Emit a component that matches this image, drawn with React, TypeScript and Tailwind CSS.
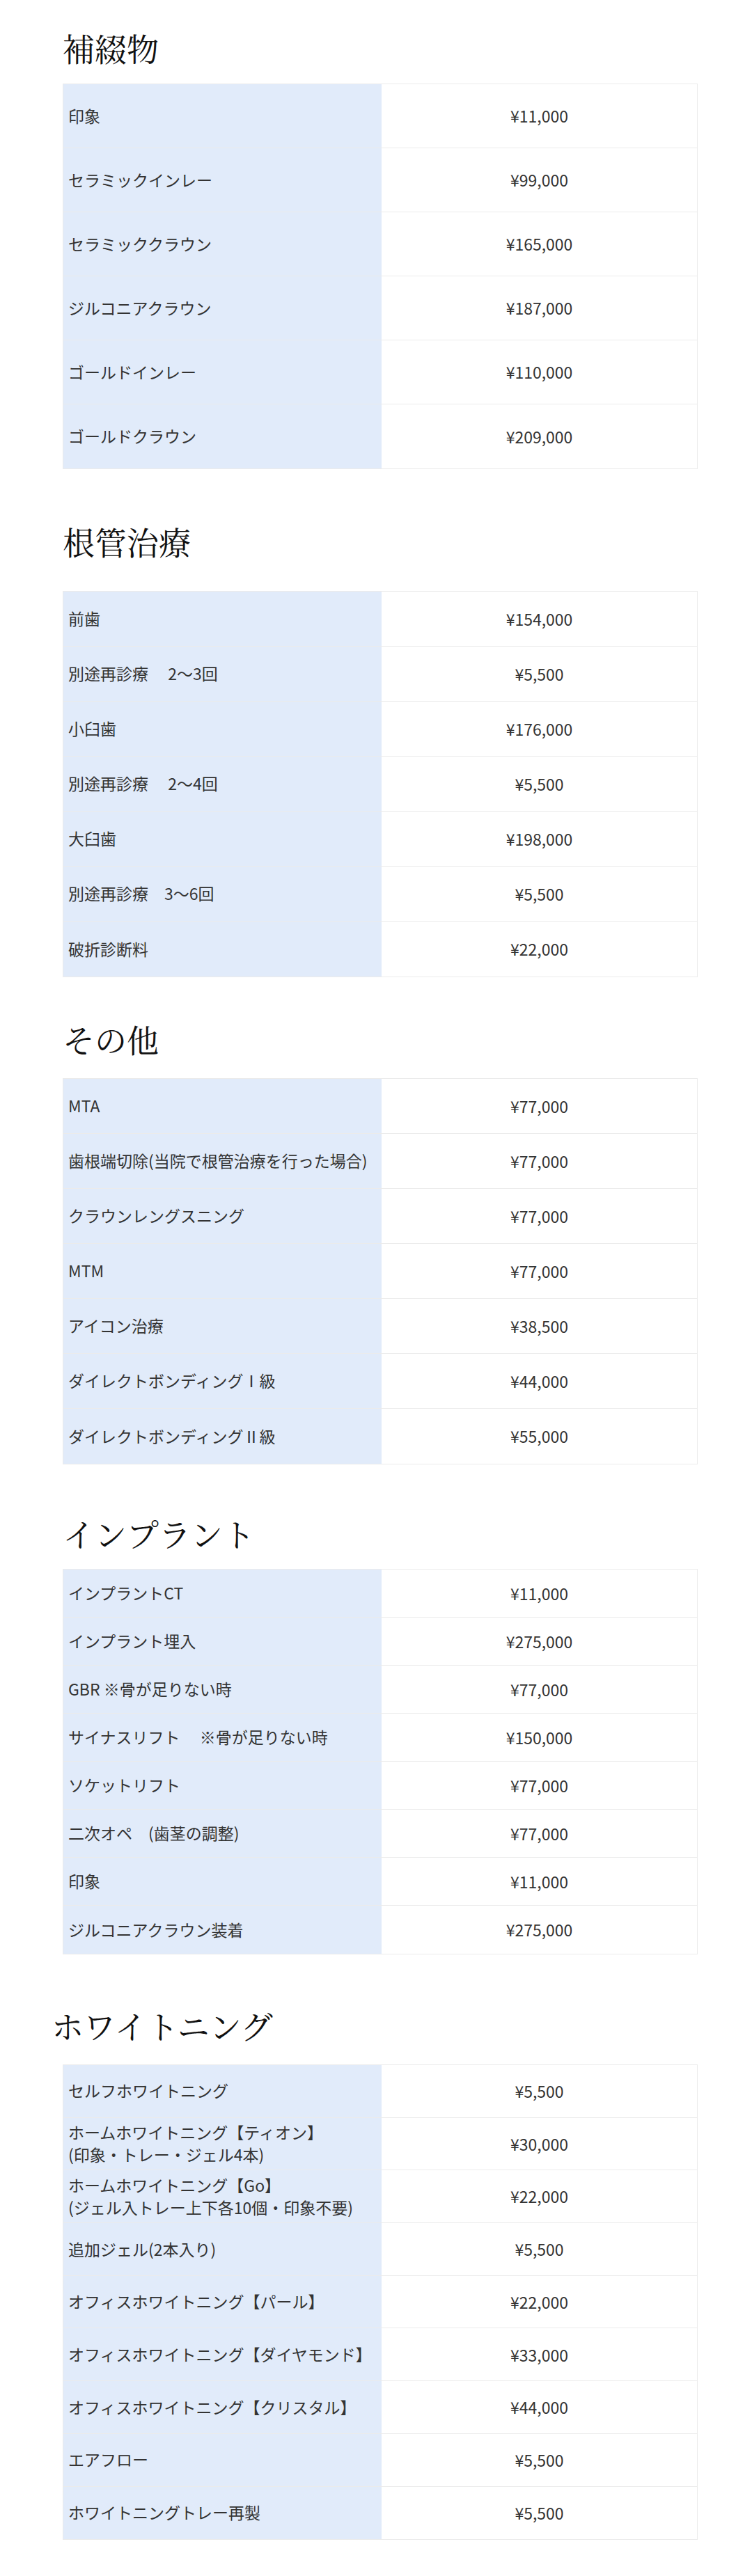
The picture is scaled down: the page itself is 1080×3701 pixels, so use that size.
// Price list for dental treatments: five sections, each a serif heading
// over a two-column table (treatment name on a pale blue band, price centred
// on white). Row heights and heading gaps differ per section, so each
// section carries its own spacing classes.

type Row = [string, string];

interface Section {
  title: string;
  headingClass: string;
  rowClass: string;
  rows: Row[];
}

const sections: Section[] = [
  {
    title: "補綴物",
    headingClass: "mt-[45px] mb-[29px] ml-[90px]",
    rowClass: "h-[92px]",
    rows: [
      ["印象", "¥11,000"],
      ["セラミックインレー", "¥99,000"],
      ["セラミッククラウン", "¥165,000"],
      ["ジルコニアクラウン", "¥187,000"],
      ["ゴールドインレー", "¥110,000"],
      ["ゴールドクラウン", "¥209,000"],
    ],
  },
  {
    title: "根管治療",
    headingClass: "mt-[80px] mb-[49px] ml-[90px]",
    rowClass: "h-[79px]",
    rows: [
      ["前歯", "¥154,000"],
      ["別途再診療　 2～3回", "¥5,500"],
      ["小臼歯", "¥176,000"],
      ["別途再診療　 2～4回", "¥5,500"],
      ["大臼歯", "¥198,000"],
      ["別途再診療　3～6回", "¥5,500"],
      ["破折診断料", "¥22,000"],
    ],
  },
  {
    title: "その他",
    headingClass: "mt-[65px] mb-[34px] ml-[90px]",
    rowClass: "h-[79px]",
    rows: [
      ["MTA", "¥77,000"],
      ["歯根端切除(当院で根管治療を行った場合)", "¥77,000"],
      ["クラウンレングスニング", "¥77,000"],
      ["MTM", "¥77,000"],
      ["アイコン治療", "¥38,500"],
      ["ダイレクトボンディングⅠ級", "¥44,000"],
      ["ダイレクトボンディングⅡ級", "¥55,000"],
    ],
  },
  {
    title: "インプラント",
    headingClass: "mt-[75px] mb-[29px] ml-[90px]",
    rowClass: "h-[69px]",
    rows: [
      ["インプラントCT", "¥11,000"],
      ["インプラント埋入", "¥275,000"],
      ["GBR ※骨が足りない時", "¥77,000"],
      ["サイナスリフト　 ※骨が足りない時", "¥150,000"],
      ["ソケットリフト", "¥77,000"],
      ["二次オペ　(歯茎の調整)", "¥77,000"],
      ["印象", "¥11,000"],
      ["ジルコニアクラウン装着", "¥275,000"],
    ],
  },
  {
    title: "ホワイトニング",
    headingClass: "mt-[78px] mb-[34px] ml-[74px]",
    rowClass: "h-[75.7px]",
    rows: [
      ["セルフホワイトニング", "¥5,500"],
      ["ホームホワイトニング【ティオン】\n(印象・トレー・ジェル4本)", "¥30,000"],
      ["ホームホワイトニング【Go】\n(ジェル入トレー上下各10個・印象不要)", "¥22,000"],
      ["追加ジェル(2本入り)", "¥5,500"],
      ["オフィスホワイトニング【パール】", "¥22,000"],
      ["オフィスホワイトニング【ダイヤモンド】", "¥33,000"],
      ["オフィスホワイトニング【クリスタル】", "¥44,000"],
      ["エアフロー", "¥5,500"],
      ["ホワイトニングトレー再製", "¥5,500"],
    ],
  },
];

function PriceTable({ rows, rowClass }: { rows: Row[]; rowClass: string }) {
  return (
    <div className="ml-[90px] w-[912px] border border-[#ebebeb]">
      {rows.map(([label, price], i) => (
        <div
          key={label + i}
          className={`grid grid-cols-[457px_1fr] ${rowClass} ${
            i < rows.length - 1 ? "border-b border-[#ebebeb]" : ""
          }`}
        >
          <div className="flex items-center whitespace-pre-line bg-[#e1ebfa] px-[7px] text-[23px] leading-[1.38] text-[#333]">
            {label}
          </div>
          <div className="flex items-center justify-center bg-white text-[23px] text-[#333]">
            {price}
          </div>
        </div>
      ))}
    </div>
  );
}

export default function App() {
  return (
    <div
      className="w-[1080px] bg-white pb-[57px] pt-px"
      style={{ fontFamily: '"Noto Sans CJK JP", "Noto Sans", sans-serif' }}
    >
      {sections.map((s, i) => (
        <section key={s.title} className={i === 0 ? "-mt-px" : ""}>
          <h2
            className={`${s.headingClass} h-[46px] text-[46px] font-normal leading-none text-[#111] [font-family:'Noto_Serif_CJK_JP','Liberation_Serif','Noto_Sans_CJK_JP',serif]`}
          >
            {s.title}
          </h2>
          <PriceTable rows={s.rows} rowClass={s.rowClass} />
        </section>
      ))}
    </div>
  );
}
